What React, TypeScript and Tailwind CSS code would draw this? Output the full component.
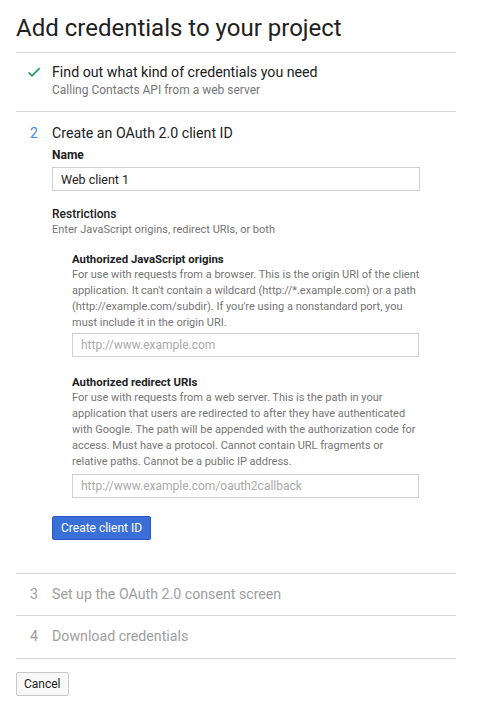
import { useState } from 'react';

export default function App() {
  const [name, setName] = useState('Web client 1');
  const [origin, setOrigin] = useState('');
  const [redirect, setRedirect] = useState('');

  return (
    <div className="min-h-screen bg-white px-4 text-[#212121]" style={{ fontFamily: 'Roboto, "Liberation Sans", sans-serif' }}>
      <div className="w-[440px]">
        <h1 className="pt-3 pb-2 text-[24px] leading-8 font-normal">Add credentials to your project</h1>

        {/* step 1 - done */}
        <div className="flex border-t border-[#d6d6d6] pt-[9px] pb-[13px]">
          <div className="flex w-9 justify-center pt-[2px]">
            <svg width="16" height="16" viewBox="0 0 24 24">
              <path d="M9 16.2L4.8 12l-1.4 1.4L9 19 21 7l-1.4-1.4z" fill="#0f9d58" stroke="#0f9d58" strokeWidth="0.6" />
            </svg>
          </div>
          <div>
            <div className="text-[14.2px] leading-5">Find out what kind of credentials you need</div>
            <div className="text-[12px] leading-4 text-[#757575]">Calling Contacts API from a web server</div>
          </div>
        </div>

        {/* step 2 - current */}
        <div className="flex border-t border-[#d6d6d6] pt-[11px] pb-[33px]">
          <div className="w-9 text-center text-[14px] leading-5 text-[#4285f4]">2</div>
          <div className="flex-1">
            <div className="text-[14.2px] leading-5">Create an OAuth 2.0 client ID</div>

            <div className="mt-1 text-[12px] leading-4 font-bold">Name</div>
            <input
              className="mt-1 block h-6 w-[368px] border border-[#d0d0d0] px-2 text-[12.5px] outline-none"
              value={name}
              onChange={(e) => setName(e.target.value)}
            />

            <div className="mt-[15px] text-[12px] leading-4 font-medium">Restrictions</div>
            <div className="text-[11px] leading-4 text-[#757575]">Enter JavaScript origins, redirect URIs, or both</div>

            <div className="pl-5">
              <div className="mt-[13px] text-[11.4px] leading-4 font-bold">Authorized JavaScript origins</div>
              <p className="w-[352px] text-[11px] leading-4 text-[#757575]">
                For use with requests from a browser. This is the origin URI of the client application. It can't contain a wildcard (http://*.example.com) or a path (http://example.com/subdir). If you're using a nonstandard port, you must include it in the origin URI.
              </p>
              <input
                className="mt-[2px] block h-6 w-[347px] border border-[#d0d0d0] px-2 text-[12px] outline-none placeholder:text-[#aaaaaa]"
                placeholder="http://www.example.com"
                value={origin}
                onChange={(e) => setOrigin(e.target.value)}
              />

              <div className="mt-[17px] text-[11.4px] leading-4 font-bold">Authorized redirect URIs</div>
              <p className="w-[347px] text-[11px] leading-4 text-[#757575]">
                For use with requests from a web server. This is the path in your application that users are redirected to after they have authenticated with Google. The path will be appended with the authorization code for access. Must have a protocol. Cannot contain URL fragments or relative paths. Cannot be a public IP address.
              </p>
              <input
                className="mt-[4px] block h-6 w-[347px] border border-[#d0d0d0] px-2 text-[12px] outline-none placeholder:text-[#aaaaaa]"
                placeholder="http://www.example.com/oauth2callback"
                value={redirect}
                onChange={(e) => setRedirect(e.target.value)}
              />
            </div>

            <button className="mt-[18px] block h-6 rounded-[2px] border border-[#2a56c6] bg-[#3b6fd8] px-2 text-[12px] text-white">
              Create client ID
            </button>
          </div>
        </div>

        {/* steps 3, 4 */}
        <div className="flex h-[42px] items-center border-t border-[#d6d6d6] text-[14.2px] text-[#9e9e9e]">
          <div className="w-9 text-center">3</div>
          <div>Set up the OAuth 2.0 consent screen</div>
        </div>
        <div className="flex h-[43px] items-center border-t border-[#d6d6d6] text-[14.2px] text-[#9e9e9e]">
          <div className="w-9 text-center">4</div>
          <div>Download credentials</div>
        </div>

        <div className="border-t border-[#d6d6d6] pt-3">
          <button className="h-6 rounded-[2px] border border-[#c8c8c8] bg-[#f8f8f8] px-[7px] text-[12px] text-[#212121]">Cancel</button>
        </div>
      </div>
    </div>
  );
}
